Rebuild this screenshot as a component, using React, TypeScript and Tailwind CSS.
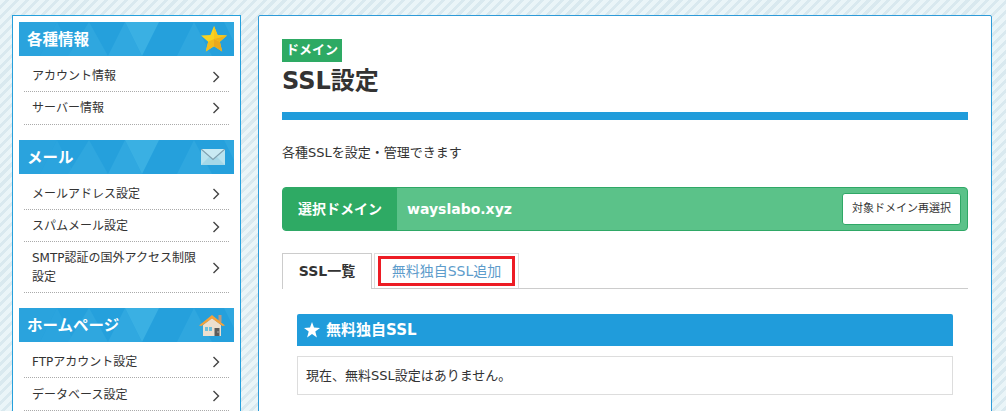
const font = "font-['DejaVu_Sans','Noto_Sans_CJK_JP',sans-serif]";

function HeaderPattern() {
  return (
    <svg className="absolute inset-0" width="215" height="34" viewBox="0 0 215 34">
      <polygon points="0,0 38,0 21,34 0,34" fill="#2aa3dd" />
      <polygon points="21,34 38,0 55,34" fill="#2ba4de" />
      <polygon points="49,34 70,0 89,34" fill="#2fa7df" />
      <polygon points="89,34 106,0 123,34" fill="#30a8e0" />
      <polygon points="106,0 140,0 123,34" fill="#3ab0e3" />
      <polygon points="158,34 175,0 193,34" fill="#2fa7df" />
      <polygon points="205,0 215,0 215,20" fill="#2fa7df" />
    </svg>
  );
}

function StarIcon() {
  return (
    <svg width="28" height="28" viewBox="0 0 28 28">
      <polygon points="14,1 17.6,10 27,10.6 19.8,16.8 22.2,26.4 14,21.2 5.8,26.4 8.2,16.8 1,10.6 10.4,10" fill="#f8d321" />
      <polygon points="14,1 17.6,10 27,10.6 14,14" fill="#f6c71e" />
      <polygon points="14,14 19.8,16.8 22.2,26.4 14,21.2" fill="#eaa81e" />
      <polygon points="14,14 14,21.2 5.8,26.4 8.2,16.8" fill="#f2ba1e" />
      <polygon points="14,14 27,10.6 19.8,16.8" fill="#efb21e" />
    </svg>
  );
}

function MailIcon() {
  return (
    <svg width="24" height="16" viewBox="0 0 24 16" className="mr-[3px]">
      <rect width="24" height="16" fill="#b9e3ef" />
      <polygon points="0,16 9,7 15,7 24,16" fill="#a5d8e8" />
      <polygon points="0,0 24,0 12,10.5" fill="#c9eaf3" />
      <polyline points="0,0 12,10.5 24,0" fill="none" stroke="#7f9fae" strokeWidth="1.2" />
    </svg>
  );
}

function HomeIcon() {
  return (
    <svg width="26" height="21" viewBox="0 0 26 21" className="mr-[3px] mt-[1px]">
      <rect x="19.5" y="0" width="3" height="7" fill="#b99a84" />
      <polygon points="4,10 13,3 22,10 22,21 4,21" fill="#ecdfcf" />
      <polygon points="0,10.5 13,0 26,10.5 23.5,11 13,3.5 2.5,11" fill="#f5a13a" />
      <rect x="6" y="12" width="3" height="4" fill="#6fc0dc" />
      <rect x="10" y="12" width="3" height="4" fill="#6fc0dc" />
      <rect x="15.5" y="13" width="5" height="8" fill="#5b5b5b" />
      <rect x="18.5" y="16.5" width="1" height="1" fill="#ffffff" />
    </svg>
  );
}

function Chevron() {
  return (
    <svg width="8" height="12" viewBox="0 0 8 12" className="shrink-0" fill="none" stroke="#444" strokeWidth="1.4">
      <polyline points="1.5,1 6.5,6 1.5,11" />
    </svg>
  );
}

function SideHeader({ title, icon }: { title: string; icon: React.ReactNode }) {
  return (
    <div className="relative mx-[6px] flex h-[34px] items-center justify-between bg-[#25a0dc] pl-[8px] pr-[6px]">
      <HeaderPattern />
      <span className="relative pt-[3px] text-[15.5px] font-bold text-white">{title}</span>
      <span className="relative flex">{icon}</span>
    </div>
  );
}

function SideRow({ h, children }: { h: string; children: React.ReactNode }) {
  return (
    <li className={`${h} mx-[11px] flex items-center justify-between border-b border-dotted border-[#aaa] pl-[8px] pr-[9px] text-[12px] leading-[19px] text-[#333]`}>
      <span className="w-[172px]">{children}</span>
      <Chevron />
    </li>
  );
}

export default function App() {
  return (
    <div className={`${font} flex h-[411px] w-[1006px] gap-[17px] overflow-hidden bg-[#e6f2f7] bg-[repeating-linear-gradient(135deg,#eaf5f8_0px,#eaf5f8_4px,#d9e9ef_4px,#d9e9ef_7px)] pl-[12px] pt-[15px]`}>
      {/* Sidebar */}
      <aside className="h-[420px] w-[229px] shrink-0 border border-[#25a0dc] bg-white pt-[6px]">
        <SideHeader title="各種情報" icon={<StarIcon />} />
        <ul className="mb-[15px] pt-[1px]">
          <SideRow h="h-[35px] pt-[5px]">アカウント情報</SideRow>
          <SideRow h="h-[33px]">サーバー情報</SideRow>
        </ul>
        <SideHeader title="メール" icon={<MailIcon />} />
        <ul className="mb-[15px]">
          <SideRow h="h-[36px] pt-[5px]">メールアドレス設定</SideRow>
          <SideRow h="h-[32px] pt-[2px]">スパムメール設定</SideRow>
          <SideRow h="h-[51px] pt-[2px]">SMTP認証の国外アクセス制限設定</SideRow>
        </ul>
        <SideHeader title="ホームページ" icon={<HomeIcon />} />
        <ul>
          <SideRow h="h-[36px] pt-[5px]">FTPアカウント設定</SideRow>
          <SideRow h="h-[33px] pt-[3px]">データベース設定</SideRow>
        </ul>
      </aside>

      {/* Main */}
      <main className="h-[420px] w-[734px] shrink-0 rounded-t-[2px] border border-[#2f9bd8] bg-white pl-[23px] pr-[23px] pt-[23px]">
        <span className="block h-[23px] w-[60px] bg-[#2eaa64] text-center text-[13px] font-bold leading-[22px] text-white">ドメイン</span>
        <h1 className="mt-[3px] text-[24px] font-bold leading-[32px] text-[#333]">SSL設定</h1>
        <div className="mt-[15px] h-[8px] bg-[#209cdb]" />
        <p className="mt-[24px] text-[13px] leading-[18px] text-[#333]">各種SSLを設定・管理できます</p>

        <div className="mt-[25px] flex h-[44px] items-stretch overflow-hidden rounded-[4px] border border-[#2fa866] bg-[#5bc289]">
          <div className="flex w-[114px] items-center justify-center bg-[#2eaa64] text-[14px] font-bold text-white">選択ドメイン</div>
          <div className="flex flex-1 items-center justify-between pl-[10px] pr-[6px]">
            <span className="text-[14px] font-bold text-white">wayslabo.xyz</span>
            <button className="h-[32px] w-[119px] rounded-[3px] border border-[#2fa866] bg-white text-[11px] text-[#333]">対象ドメイン再選択</button>
          </div>
        </div>

        {/* Tabs */}
        <div className="mt-[22px] flex h-[36px] gap-[2px] border-b border-[#ccc]">
          <div className="flex h-[36px] w-[90px] items-center justify-center border border-b-0 border-[#ccc] bg-white text-[14px] font-bold text-[#333]">SSL一覧</div>
          <div className="h-[35px] w-[145px] border border-b-0 border-[#ddd] px-[3px] pt-[2px]">
            <div className="flex h-[30px] items-center justify-center border-[3px] border-[#ed1c24] text-[14px] text-[#5d9ccb]">無料独自SSL追加</div>
          </div>
        </div>

        {/* Section */}
        <div className="mx-[15px] mt-[25px]">
          <div className="flex h-[32px] items-center gap-[6px] rounded-t-[2px] bg-[#209cdb] pl-[7px] text-[15px] font-bold text-white">
            <svg width="16" height="16" viewBox="0 0 16 16" fill="#fff">
              <polygon points="8,0 10,5.6 16,5.9 11.3,9.6 12.9,15.4 8,12.1 3.1,15.4 4.7,9.6 0,5.9 6,5.6" />
            </svg>
            無料独自SSL
          </div>
          <div className="mt-[10px] flex h-[39px] items-center border border-[#ddd] pl-[8px] text-[13px] text-[#333]">現在、無料SSL設定はありません。</div>
        </div>
      </main>
    </div>
  );
}
